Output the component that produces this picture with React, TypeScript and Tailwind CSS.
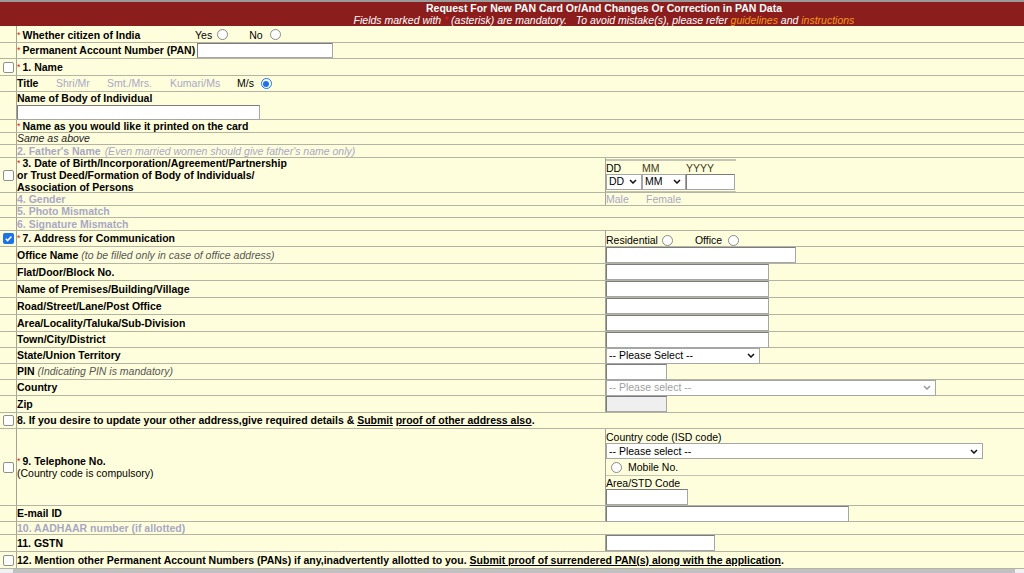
import React from 'react';

const rowLine = 'border-b border-[#b4b4a4]';

function Box({ checked }: { checked?: boolean }) {
    if (checked) {
        return (
            <span className="flex h-[11px] w-[11px] items-center justify-center rounded-[2px] bg-[#1a73e8]">
                <svg viewBox="0 0 10 10" className="h-[9px] w-[9px]">
                    <path d="M2 5.3l2 2 4.2-4.6" stroke="white" strokeWidth="1.7" fill="none" />
                </svg>
            </span>
        );
    }
    return <span className="h-[11px] w-[11px] rounded-[2px] border border-[#8f8f8f] bg-white" />;
}

function Radio({ on }: { on?: boolean }) {
    if (on) {
        return (
            <span className="inline-flex h-[11px] w-[11px] items-center justify-center rounded-full border border-[#1a73e8] bg-white">
                <span className="h-[6px] w-[6px] rounded-full bg-[#1a73e8]" />
            </span>
        );
    }
    return <span className="inline-block h-[11px] w-[11px] rounded-full border border-[#8a8a8a] bg-white" />;
}

function Star() {
    return <span className="mr-[2px] text-[9px] font-normal text-[#e02020]">*</span>;
}

function Field({ w, h = 'h-[16px]', disabled }: { w: string; h?: string; disabled?: boolean }) {
    return (
        <input
            readOnly
            className={`${h} ${w} border border-[#a6a6a6] border-t-[#7c7c7c] border-l-[#7c7c7c] ${disabled ? 'bg-[#efefef]' : 'bg-white'} outline-none`}
        />
    );
}

function Chevron({ dim }: { dim?: boolean }) {
    return (
        <svg viewBox="0 0 8 5" className="h-[5px] w-[8px]">
            <path d="M1 1l3 3 3-3" stroke={dim ? '#999' : '#111'} strokeWidth="1.5" fill="none" />
        </svg>
    );
}

function Select({ label, w, dim }: { label: string; w: string; dim?: boolean }) {
    return (
        <div
            className={`flex h-[16px] ${w} items-center justify-between border border-[#a6a6a6] bg-white pl-[2px] pr-[4px] ${dim ? 'text-[#a0a0a0]' : 'text-black'}`}
        >
            <span className="font-normal">{label}</span>
            <Chevron dim={dim} />
        </div>
    );
}

interface RowProps {
    h: string;
    box?: 'on' | 'off';
    children?: React.ReactNode;
    right?: React.ReactNode;
}

function Row({ h, box, children, right }: RowProps) {
    return (
        <div className={`flex ${h} ${rowLine}`}>
            <div className="flex w-[17px] shrink-0 items-center justify-center border-r border-[#a4a494]">
                {box && <Box checked={box === 'on'} />}
            </div>
            {right === undefined ? (
                <div className="flex min-w-0 flex-1 items-center">{children}</div>
            ) : (
                <>
                    <div className="flex w-[588px] shrink-0 items-center">{children}</div>
                    <div className="flex flex-1 items-center border-l border-[#a4a494]">{right}</div>
                </>
            )}
        </div>
    );
}

const grey = 'text-[#a8a8c6]';

export default function App() {
    return (
        <div className="h-[573px] w-[1024px] overflow-hidden bg-[#fffedc] font-['Liberation_Sans',Arial,sans-serif] text-[10.5px] leading-none text-black">
            <div className="h-[2px] bg-[#9a9a9a]" />
            <div className="flex h-[24px] flex-col justify-center bg-[#8b1d1d] pl-[184px] text-center text-white">
                <div className="font-bold">Request For New PAN Card Or/And Changes Or Correction in PAN Data</div>
                <div className="mt-[1px] italic">
                    Fields marked with <span className="text-[#e02020]">*</span> (asterisk) are mandatory.&nbsp;&nbsp; To avoid mistake(s), please refer{' '}
                    <span className="text-[#f59a1a]">guidelines</span> and <span className="text-[#f59a1a]">instructions</span>
                </div>
            </div>

            <Row h="h-[17px]">
                <div className="flex w-[178px] items-center pt-[2px] font-bold">
                    <Star />Whether citizen of India
                </div>
                <span className="pt-[2px]">Yes</span>
                <span className="ml-[5px] flex pt-[1px]"><Radio /></span>
                <span className="ml-[21px] pt-[2px]">No</span>
                <span className="ml-[7px] flex pt-[1px]"><Radio /></span>
            </Row>
            <Row h="h-[16px]">
                <span className="flex items-center font-bold">
                    <Star />Permanent Account Number (PAN)
                </span>
                <span className="ml-[2px] flex"><Field w="w-[136px]" h="h-[15px]" /></span>
            </Row>
            <Row h="h-[17px]" box="off">
                <span className="flex items-center font-bold">
                    <Star />1. Name
                </span>
            </Row>
            <Row h="h-[16px]">
                <span className="w-[39px] font-bold">Title</span>
                <span className={`w-[51px] ${grey}`}>Shri/Mr</span>
                <span className={`w-[63px] ${grey}`}>Smt./Mrs.</span>
                <span className={`w-[67px] ${grey}`}>Kumari/Ms</span>
                <span>M/s</span>
                <span className="ml-[7px] flex"><Radio on /></span>
            </Row>
            <div className={`flex h-[28px] ${rowLine}`}>
                <div className="w-[17px] shrink-0 border-r border-[#a4a494]" />
                <div className="flex flex-col pt-[1px]">
                    <span className="font-bold">Name of Body of Individual</span>
                    <span className="mt-[1px] flex"><Field w="w-[243px]" h="h-[15px]" /></span>
                </div>
            </div>
            <Row h="h-[13px]">
                <span className="flex items-center font-bold">
                    <Star />Name as you would like it printed on the card
                </span>
            </Row>
            <Row h="h-[12px]">
                <span className="italic text-[#222]">Same as above</span>
            </Row>
            <Row h="h-[13px]">
                <span className={`font-bold ${grey}`}>2. Father&apos;s Name</span>
                <span className={`ml-[4px] italic ${grey}`}>(Even married women should give father&apos;s name only)</span>
            </Row>

            <div className={`flex h-[35px] ${rowLine}`}>
                <div className="flex w-[17px] shrink-0 items-center justify-center border-r border-[#a4a494]">
                    <Box />
                </div>
                <div className="flex w-[588px] shrink-0 flex-col justify-center font-bold leading-[12px]">
                    <span className="flex items-center">
                        <Star />3. Date of Birth/Incorporation/Agreement/Partnership
                    </span>
                    <span>or Trust Deed/Formation of Body of Individuals/</span>
                    <span>Association of Persons</span>
                </div>
                <div className="flex flex-1 items-center border-l border-[#a4a494]">
                    <div className="w-[130px] border-t-2 border-b border-[#c4c4b4] pt-[2px]">
                        <div className="flex h-[11px] items-center">
                            <span className="w-[36px]">DD</span>
                            <span className="w-[44px] text-[#3a3a1a]">MM</span>
                            <span className="text-[#3a3a1a]">YYYY</span>
                        </div>
                        <div className="flex pb-[1px]">
                            <Select label="DD" w="w-[36px]" />
                            <Select label="MM" w="w-[44px]" />
                            <Field w="w-[49px]" />
                        </div>
                    </div>
                </div>
            </div>

            <Row
                h="h-[13px]"
                right={
                    <>
                        <span className={`w-[40px] ${grey}`}>Male</span>
                        <span className={grey}>Female</span>
                    </>
                }
            >
                <span className={`font-bold ${grey}`}>4. Gender</span>
            </Row>
            <Row h="h-[12px]">
                <span className={`font-bold ${grey}`}>5. Photo Mismatch</span>
            </Row>
            <Row h="h-[13px]">
                <span className={`font-bold ${grey}`}>6. Signature Mismatch</span>
            </Row>

            <Row
                h="h-[16px]"
                box="on"
                right={
                    <div className="flex items-end pt-[3px]">
                        <span>Residential</span>
                        <span className="ml-[4px] flex"><Radio /></span>
                        <span className="ml-[22px]">Office</span>
                        <span className="ml-[6px] flex"><Radio /></span>
                    </div>
                }
            >
                <span className="flex items-center font-bold">
                    <Star />7. Address for Communication
                </span>
            </Row>
            <Row h="h-[17px]" right={<Field w="w-[190px]" />}>
                <span className="font-bold">Office Name</span>
                <span className="ml-[3px] italic text-[#555]">(to be filled only in case of office address)</span>
            </Row>
            <Row h="h-[17px]" right={<Field w="w-[163px]" />}>
                <span className="font-bold">Flat/Door/Block No.</span>
            </Row>
            <Row h="h-[17px]" right={<Field w="w-[163px]" />}>
                <span className="font-bold">Name of Premises/Building/Village</span>
            </Row>
            <Row h="h-[17px]" right={<Field w="w-[163px]" />}>
                <span className="font-bold">Road/Street/Lane/Post Office</span>
            </Row>
            <Row h="h-[17px]" right={<Field w="w-[163px]" />}>
                <span className="font-bold">Area/Locality/Taluka/Sub-Division</span>
            </Row>
            <Row h="h-[16px]" right={<Field w="w-[163px]" />}>
                <span className="font-bold">Town/City/District</span>
            </Row>
            <Row h="h-[16px]" right={<Select label="-- Please Select --" w="w-[154px]" />}>
                <span className="font-bold">State/Union Territory</span>
            </Row>
            <Row h="h-[16px]" right={<Field w="w-[61px]" />}>
                <span className="font-bold">PIN</span>
                <span className="ml-[3px] italic text-[#555]">(Indicating PIN is mandatory)</span>
            </Row>
            <Row h="h-[16px]" right={<Select label="-- Please select --" w="w-[330px]" dim />}>
                <span className="font-bold">Country</span>
            </Row>
            <Row h="h-[17px]" right={<Field w="w-[61px]" disabled />}>
                <span className="font-bold">Zip</span>
            </Row>
            <Row h="h-[16px]" box="off">
                <span className="font-bold">
                    8. If you desire to update your other address,give required details &amp; <span className="underline">Submit</span>{' '}
                    <span className="underline">proof of other address also</span>.
                </span>
            </Row>

            <div className={`flex h-[77px] ${rowLine}`}>
                <div className="flex w-[17px] shrink-0 items-center justify-center border-r border-[#a4a494] pt-[1px]">
                    <Box />
                </div>
                <div className="flex w-[588px] shrink-0 flex-col justify-center leading-[12px]">
                    <span className="flex items-center font-bold">
                        <Star />9. Telephone No.
                    </span>
                    <span>(Country code is compulsory)</span>
                </div>
                <div className="flex flex-1 flex-col border-l border-[#a4a494]">
                    <span className="mt-[3px] h-[11px]">Country code (ISD code)</span>
                    <Select label="-- Please select --" w="w-[377px]" />
                    <div className="flex h-[17px] items-center border-b border-[#c4c4b4] pl-[5px]">
                        <Radio />
                        <span className="ml-[6px]">Mobile No.</span>
                    </div>
                    <span className="mt-[2px] h-[11px]">Area/STD Code</span>
                    <Field w="w-[82px]" />
                </div>
            </div>

            <Row h="h-[16px]" right={<Field w="w-[243px]" />}>
                <span className="font-bold">E-mail ID</span>
            </Row>
            <Row h="h-[13px]">
                <span className={`font-bold ${grey}`}>10. AADHAAR number (if allotted)</span>
            </Row>
            <Row h="h-[17px]" right={<Field w="w-[109px]" />}>
                <span className="font-bold">11. GSTN</span>
            </Row>
            <Row h="h-[17px]" box="off">
                <span className="font-bold">
                    12. Mention other Permanent Account Numbers (PANs) if any,inadvertently allotted to you.{' '}
                    <span className="underline">Submit proof of surrendered PAN(s) along with the application</span>.
                </span>
            </Row>
            <div className="flex h-[4px] bg-[#f1f1f1]">
                <div className="ml-[13px] w-[1002px] bg-[#c1c1c1]" />
            </div>
        </div>
    );
}
